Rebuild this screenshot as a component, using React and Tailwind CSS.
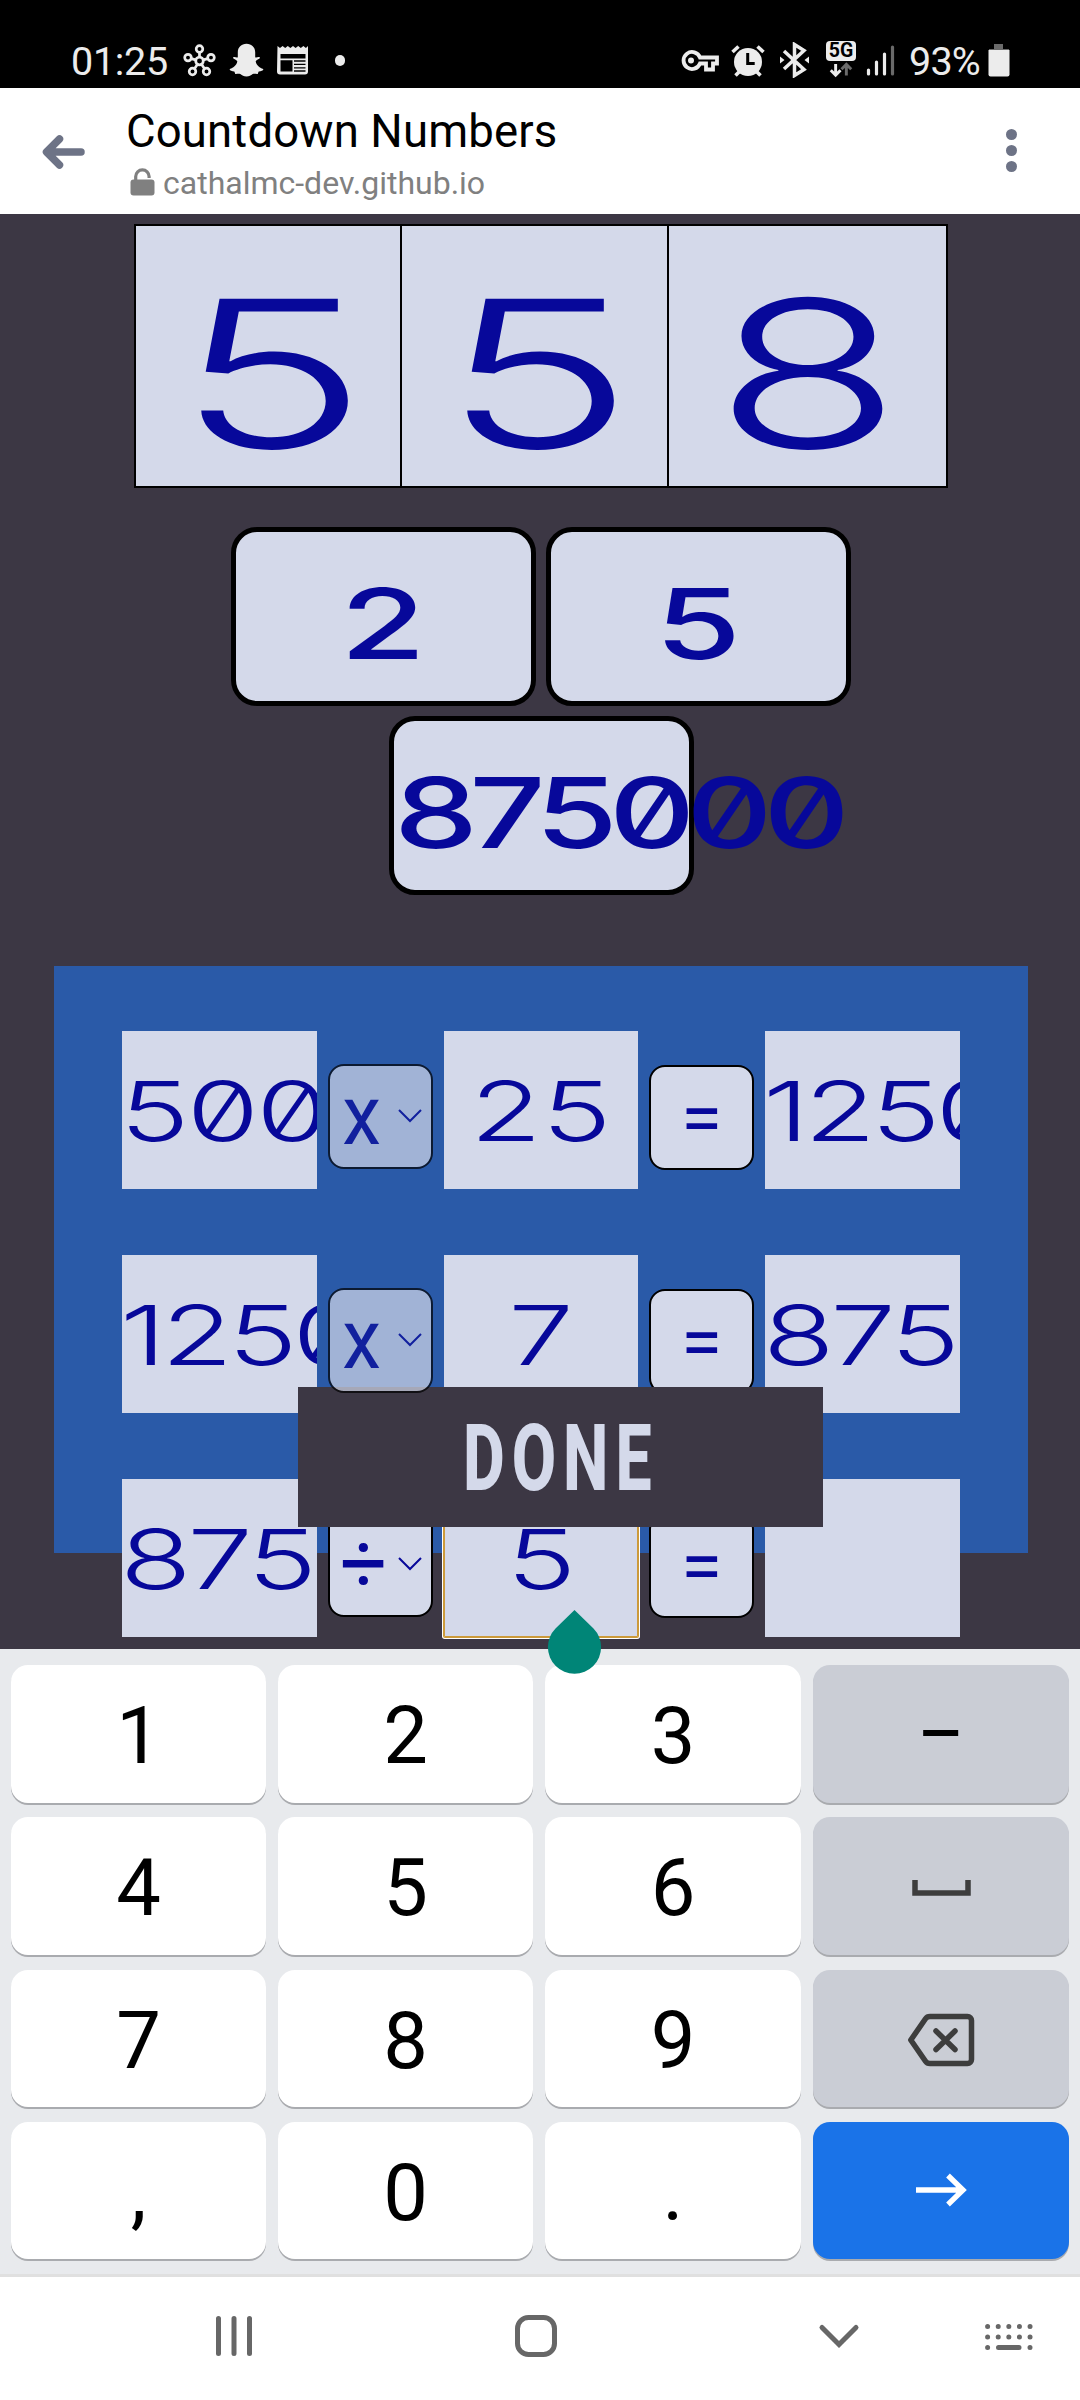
import React from "react";

const INK = "#07089a";

function StatusBar() {
  return (
    <header className="flex h-[88px] items-end bg-black pb-[8px] pl-[71px] pr-[70px] text-[#ececec]">
      <div className="flex h-[40px] items-center">
        <span className="w-[112px] pt-[4px] text-[39.5px] leading-[40px] tracking-[-0.3px]">01:25</span>
        <svg className="h-[33px] w-[33px]" viewBox="0 0 33 33" fill="none" stroke="#ececec" strokeWidth="2.7">
          <circle cx="16.5" cy="17" r="3.8" />
          <circle cx="16.5" cy="5" r="3.3" />
          <circle cx="5" cy="13.6" r="3.3" />
          <circle cx="28" cy="13.6" r="3.3" />
          <circle cx="9.5" cy="27.5" r="3.3" />
          <circle cx="23.5" cy="27.5" r="3.3" />
          <path d="M16.5 8.5V13M8.3 14.6l4.4 1.3M24.7 14.6l-4.4 1.3M11.5 24.8l2.8-4.2M21.5 24.8l-2.8-4.2" />
        </svg>
        <svg className="ml-[13px] h-[34px] w-[35px]" viewBox="0 0 35 34" fill="#ececec">
          <path d="M17.5.7c5.200 0 8.700 3.600 8.700 8.500v5.100c1.500.7 3.200-.9 4.700.2.800 1.300-3.400 2-4.200 3.800.6 3.800 3.500 6.600 7.600 7.600.4 1.800-2.300 2-4.500 2.700-.8.500-.4 1.900-1.100 2.300-1.800.2-3.300-.6-5 .2-2 1.500-3.300 2.300-6.200 2.300s-4.200-.8-6.200-2.300c-1.700-.8-3.200 0-5-.2-.7-.4-.3-1.800-1.100-2.300C3 27.900.3 27.700.7 25.900c4.100-1 7-3.800 7.600-7.600-.8-1.800-5-2.500-4.200-3.800 1.500-1.100 3.200.5 4.700-.2V9.200C8.800 4.300 12.300.7 17.500.7Z" />
        </svg>
        <svg className="ml-[13px] h-[32px] w-[32px]" viewBox="0 0 32 32">
          <path fill="#ececec" d="M.5 2l2.500 2 2.600-2 2.600 2 2.600-2 2.600 2L16 2l2.600 2 2.600-2 2.600 2 2.600-2 2.500 2 2.100-2v25.500a3 3 0 0 1-3 3h-25a3 3 0 0 1-3-3Z" />
          <path d="M3.500 10h25v4.500h-25zM3.500 16.300h12v11.200h-12z" />
          <path stroke="#000" strokeWidth="1.300" d="M17 17h11.500M17 20.400h11.500M17 23.800h11.500M17 27h11.500" />
        </svg>
        <span className="ml-[26px] h-[11px] w-[10px] rounded-full bg-[#ececec]" />
      </div>
      <div className="ml-auto flex h-[40px] items-center">
        <svg className="h-[24px] w-[39px]" viewBox="0 0 39 24" fill="none" stroke="#ececec" strokeWidth="3.800">
          <path d="M20 9.500h17v6h-4v6h-7v-6h-6a8.500 8.500 0 1 1 0-6Z" />
          <circle cx="11" cy="12.500" r="1.500" strokeWidth="3" />
        </svg>
        <svg className="ml-[12px] h-[33px] w-[34px]" viewBox="0 0 34 33" fill="none" stroke="#ececec" strokeWidth="3.600">
          <circle cx="17" cy="18" r="14" fill="#ececec" stroke="none" />
          <path d="M1.500 8L7.500 2.500M32.500 8L26.500 2.500M4.500 31.500l4-4M29.500 31.500l-4-4" />
          <path stroke="#000" strokeWidth="3" d="M16.700 9v10.500h7" />
        </svg>
        <svg className="ml-[14px] h-[36px] w-[31px]" viewBox="0 0 31 36" fill="none" stroke="#ececec" strokeWidth="3.500">
          <path d="M5 9l20 18.500-9.500 6V2.500l9.500 6L5 27" />
          <path fill="#ececec" stroke="none" d="M1 14.500l4.500 3.500L1 21.500zM30 14.500L25.500 18l4.500 3.500z" />
        </svg>
        <div className="ml-[16px] flex h-[38px] w-[30px] flex-col items-center">
          <span className="flex h-[21px] w-[30px] items-center justify-center rounded-[4px] bg-[#ececec] text-[19.500px] font-bold leading-none text-black">
            5G
          </span>
          <svg className="h-[18px] w-[30px]" viewBox="0 0 30 18" fill="none" strokeWidth="3">
            <path stroke="#ececec" d="M9.500 3v11M4.500 9.500l5 5 5-5" />
            <path stroke="#6a6a6a" d="M20.500 15V4M15.500 8.500l5-5 5 5" />
          </svg>
        </div>
        <svg className="ml-[10px] h-[34px] w-[29px]" viewBox="0 0 29 34" strokeWidth="3.200" strokeLinecap="round" stroke="#ececec">
          <path d="M2.500 27v4M10.500 19v12M18.500 11v20" />
          <path stroke="#6a6a6a" d="M26.500 4v27" />
        </svg>
        <span className="ml-[14px] w-[79px] pt-[4px] text-[39.500px] leading-[40px] tracking-[-0.800px]">93%</span>
        <svg className="h-[34px] w-[22px]" viewBox="0 0 22 34">
          <path fill="#6a6a6a" d="M6 1h9v5h6v3H1V6h5z" />
          <path fill="#ececec" d="M.500 7h21v24.500a2 2 0 0 1-2 2h-17a2 2 0 0 1-2-2z" />
        </svg>
      </div>
    </header>
  );
}

function AddressBar() {
  return (
    <div className="flex h-[126px] bg-white">
      <svg className="ml-[40px] mt-[45px] h-[38px] w-[48px]" viewBox="0 0 48 38" fill="none" stroke="#6d7386" strokeWidth="7.500" strokeLinecap="round" strokeLinejoin="round">
        <path d="M19.500 6L6.500 19l13 13M7 19h34" />
      </svg>
      <div className="ml-[38px] pt-[17px]">
        <h1 className="whitespace-nowrap text-[45.500px] leading-[54px] tracking-[0.150px] text-black">Countdown Numbers</h1>
        <div className="mt-[5px] flex items-center pl-[4px] text-[#808080]">
          <svg className="-mt-[3px] h-[29px] w-[25px]" viewBox="0 0 25 29">
            <path d="M5.700 15V9.500a6.700 6.700 0 0 1 13.400 0V11" fill="none" stroke="#808080" strokeWidth="3.200" />
            <rect x=".500" y="12.500" width="24" height="16" rx="3" fill="#808080" />
          </svg>
          <span className="ml-[8px] whitespace-nowrap text-[32px] leading-[38px]">cathalmc-dev.github.io</span>
        </div>
      </div>
      <div className="ml-auto mr-[63px] mt-[41px] flex flex-col gap-[5px]">
        <i className="h-[11px] w-[11px] rounded-full bg-[#6d7386]" />
        <i className="h-[11px] w-[11px] rounded-full bg-[#6d7386]" />
        <i className="h-[11px] w-[11px] rounded-full bg-[#6d7386]" />
      </div>
    </div>
  );
}

const DIGITS = "inline-block whitespace-nowrap leading-none [font-family:Inter,sans-serif] [font-feature-settings:'zero']";

function Target() {
  const cell = "flex items-center pt-[34px]";
  const digit = DIGITS + " origin-center text-[205px] font-light w-[170px] text-center";
  return (
    <div className="ml-[134px] mt-[10px] flex h-[264px] w-[814px] border-2 border-black bg-[#d4d9ea]">
      <div className={cell + " w-[266px] border-r-2 border-black pl-[51px]"}><span className={digit + " scale-x-[1.590]"}>5</span></div>
      <div className={cell + " w-[267px] border-r-2 border-black pl-[51px]"}><span className={digit + " scale-x-[1.590]"}>5</span></div>
      <div className={cell + " flex-1 pl-[54px]"}><span className={digit + " scale-x-[1.500]"}>8</span></div>
    </div>
  );
}

function Tile({ children, left }) {
  return (
    <div className={"flex h-[179px] w-[305px] items-center rounded-[26px] border-[5px] border-black bg-[#d4d9ea] pt-[17px] " + (left ? "justify-start" : "justify-center")}>
      <span className={DIGITS + " text-[97.500px] font-medium " + (left ? "origin-left scale-x-[1.370] tracking-[-6.500px]" : "origin-center scale-x-[1.430]")}>{children}</span>
    </div>
  );
}

function Cell({ children, left, focus, tracking = "" }) {
  return (
    <div
      className={
        "flex h-[158px] min-w-0 items-center overflow-hidden bg-[#d4d9ea] pt-[3px] " +
        (left ? "justify-start " : "justify-center ") +
        (focus ? "rounded-[1px] shadow-[inset_0_0_0_1px_#cc9a3a,0_0_0_1px_#cc9a3a,0_0_0_2px_#ffffff]" : "")
      }
    >
      <span className={DIGITS + " scale-x-[1.420] text-[82.500px] font-light " + (left ? "origin-left -ml-[2px] " : "origin-center ") + tracking}>{children}</span>
    </div>
  );
}

function Operator({ children, locked, size }) {
  return (
    <div className={"mt-[12px] flex h-[105px] w-[105px] items-center rounded-[16px] border-2 border-black bg-[#d4d9ea] pl-[10px] " + (locked ? "relative z-20 opacity-70" : "")}>
      <span className={"w-[44px] text-center leading-[80px] " + size}>{children}</span>
      <svg className="ml-[14px] h-[14px] w-[24px]" viewBox="0 0 24 14" fill="none" stroke={INK} strokeWidth="2">
        <path d="M1 1l11 11L23 1" />
      </svg>
    </div>
  );
}

function Equals() {
  return (
    <div className="mt-[14px] flex h-[105px] w-[105px] items-center justify-center rounded-[16px] border-2 border-black bg-[#d4d9ea]">
      <span className="text-[75px] leading-[80px]">=</span>
    </div>
  );
}

function Row({ children }) {
  return <div className="grid h-[158px] grid-cols-[195px_105px_194px_105px_195px] items-center gap-[11px]">{children}</div>;
}

function Key({ children, tone }) {
  const tones = { light: "bg-white", grey: "bg-[#cacdd5]", blue: "bg-[#1a73e8]" };
  return (
    <div className={"flex h-[137.500px] items-center justify-center rounded-[17px] pt-[4px] text-[79.500px] leading-none text-black shadow-[0_2px_0_#a9abaf] " + tones[tone || "light"]}>
      {children}
    </div>
  );
}

function Keyboard() {
  return (
    <div className="grid h-[625px] grid-cols-[255px_255px_256px_256px] content-start gap-x-[12px] gap-y-[14.800px] bg-[#e8eaed] px-[11px] pt-[16px]">
      <Key>1</Key>
      <Key>2</Key>
      <Key>3</Key>
      <Key tone="grey"><span className="-mt-[4px] inline-block scale-x-[0.900]">–</span></Key>
      <Key>4</Key>
      <Key>5</Key>
      <Key>6</Key>
      <Key tone="grey">
        <svg className="h-[16px] w-[59px]" viewBox="0 0 59 16" fill="none" stroke="#3d3d3d" strokeWidth="5.500">
          <path d="M3 0v13h53V0" />
        </svg>
      </Key>
      <Key>7</Key>
      <Key>8</Key>
      <Key>9</Key>
      <Key tone="grey">
        <svg className="h-[54px] w-[68px]" viewBox="0 0 68 54" fill="none" stroke="#3d3d3d" strokeWidth="5.500" strokeLinejoin="round" strokeLinecap="round">
          <path d="M23 3.500h37.500a4 4 0 0 1 4 4v39a4 4 0 0 1-4 4H23c-2 0-3.500-.800-4.500-2.300L3.800 27 18.500 5.800c1-1.500 2.500-2.300 4.500-2.300Z" />
          <path d="M29 18l19 18.500M48 18L29 36.500" />
        </svg>
      </Key>
      <Key>,</Key>
      <Key>0</Key>
      <Key>.</Key>
      <Key tone="blue">
        <svg className="-mt-[6px] h-[34px] w-[51px]" viewBox="0 0 51 34" fill="none" stroke="#fff" strokeWidth="5.300">
          <path d="M0 17h46M32 2.500L47 17 32 31.500" />
        </svg>
      </Key>
    </div>
  );
}

function NavBar() {
  return (
    <nav className="flex h-[123px] items-start bg-white">
      <svg className="ml-[214px] mt-[38px] h-[42px] w-[40px]" viewBox="0 0 40 42" stroke="#676767" strokeWidth="5" strokeLinecap="round">
        <path d="M4.500 3.500v35M20 3.500v35M35.500 3.500v35" />
      </svg>
      <svg className="ml-[261px] mt-[38px] h-[42px] w-[42px]" viewBox="0 0 42 42" fill="none" stroke="#676767" strokeWidth="5">
        <rect x="2.500" y="2.500" width="37" height="37" rx="11" />
      </svg>
      <svg className="ml-[261px] mt-[46px] h-[27px] w-[42px]" viewBox="0 0 42 27" fill="none" stroke="#676767" strokeWidth="5" strokeLinecap="round">
        <path d="M4 4.500l17 17 17-17" />
      </svg>
      <svg className="ml-[124px] mt-[45px] h-[32px] w-[50px]" viewBox="0 0 50 32" stroke="#676767" strokeWidth="5" strokeLinecap="round">
        <path strokeDasharray="0.010 10.600" d="M3.600 4.500h43M3.600 15h43" />
        <path d="M3.600 25.500h.010M46 25.500h.010M14.500 25.500h20.500" />
      </svg>
    </nav>
  );
}

export default function App() {
  return (
    <div className="flex h-[2400px] w-[1080px] flex-col overflow-hidden bg-white [font-family:Roboto,sans-serif]">
      <StatusBar />
      <AddressBar />
      <main className="relative h-[1435px] bg-[#3c3744] text-[#07089a]">
        <div className="flow-root">
          <Target />
        </div>
        <div className="mt-[39px] flex justify-center gap-[10px] pl-[2px]">
          <Tile>2</Tile>
          <Tile>5</Tile>
        </div>
        <div className="mt-[10px] flex justify-center pl-[2px]">
          <Tile left>875000</Tile>
        </div>
        <section className="ml-[54px] mt-[71px] flex h-[587px] w-[974px] flex-col gap-[66px] bg-[#2a5aa8] pl-[68px] pt-[65px]">
          <Row>
            <Cell left tracking="tracking-[-2px]">500</Cell>
            <Operator locked size="text-[83px]"><span className="inline-block scale-x-[0.940]">x</span></Operator>
            <Cell>25</Cell>
            <Equals />
            <Cell left tracking="tracking-[-3.500px]">1250</Cell>
          </Row>
          <Row>
            <Cell left tracking="tracking-[-3.500px]">1250</Cell>
            <Operator locked size="text-[83px]"><span className="inline-block scale-x-[0.940]">x</span></Operator>
            <Cell>7</Cell>
            <Equals />
            <Cell left tracking="tracking-[-3px]">875</Cell>
          </Row>
          <Row>
            <Cell left tracking="tracking-[-3px]">875</Cell>
            <Operator size="text-[83px]">÷</Operator>
            <Cell focus>5</Cell>
            <Equals />
            <Cell />
          </Row>
        </section>
        <button className="absolute left-[298px] top-[1173px] z-10 flex h-[140px] w-[525px] items-center justify-center bg-[#3c3744] pt-[3px] text-[#d4d9ea]">
          <span className="inline-block scale-x-[0.700] text-[92px] font-extrabold leading-none tracking-[10px]">DONE</span>
        </button>
        <svg className="absolute left-[547px] top-[1395px] z-30 h-[65px] w-[55px]" viewBox="0 0 55 65">
          <path fill="#008577" d="M27.500 1L46.500 19.500a26.600 26.600 0 1 1-38 0Z" />
        </svg>
      </main>
      <Keyboard />
      <div className="h-[3px] bg-[#e0e0e0]" />
      <NavBar />
    </div>
  );
}
